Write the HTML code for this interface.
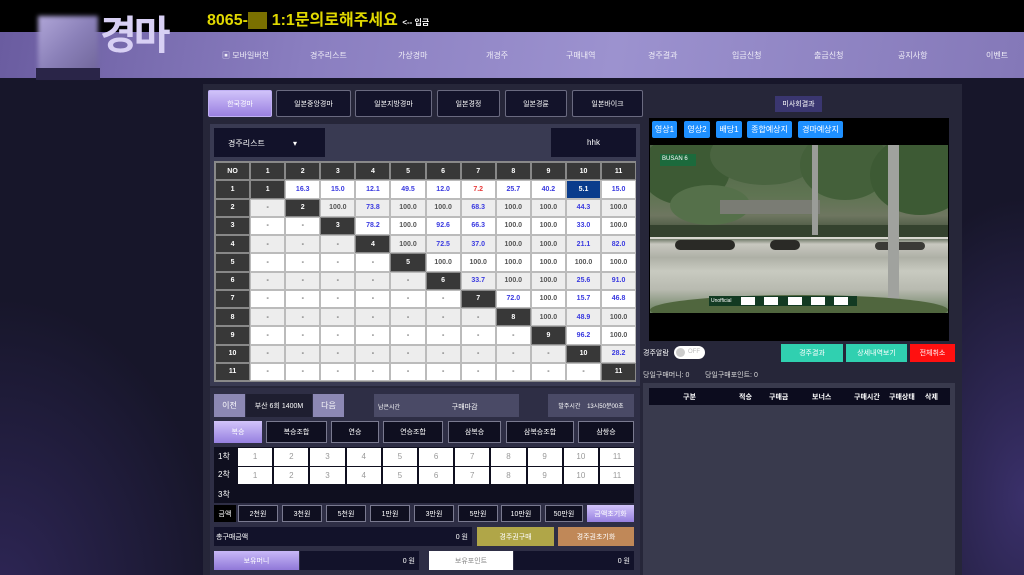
<!DOCTYPE html>
<html><head><meta charset="utf-8">
<style>
*{margin:0;padding:0;box-sizing:border-box}
body{width:1024px;height:575px;overflow:hidden;position:relative;font-family:"Liberation Sans","Noto Sans CJK KR",sans-serif;background:#171628;color:#fff}
.a{position:absolute}
.c{display:flex;align-items:center;justify-content:center}
.bg{position:absolute;left:0;top:78px;width:1024px;height:497px;background:radial-gradient(ellipse 220px 300px at 0px 520px,#2e2656 0%,rgba(40,32,80,0) 100%),radial-gradient(ellipse 160px 300px at 1024px 420px,#3a306a 0%,rgba(40,32,80,0) 100%),#17162a}
.nav{left:0;top:32px;width:1024px;height:46px;background:linear-gradient(100deg,#6a5ca0 0%,#8a7ec0 30%,#9c92cf 60%,#8478b8 100%)}
.nav span{position:absolute;top:18px;font-size:8px;color:#f0eef8}
.tab{top:90px;height:27px;font-size:7px;border:1px solid #6a6a80;background:#13132a;border-radius:2px}
.g{display:grid;grid-template-columns:repeat(12,35.1px);grid-auto-rows:18.25px;left:214px;top:161px;width:422px;background:#8a8a8a;border:1px solid #8a8a8a}
.g div{display:flex;align-items:center;justify-content:center;font-size:7px;font-weight:bold;border:0.5px solid #bbb;color:#555}
.h{background:#383838!important;color:#fff!important;border-color:#888!important}
.w{background:#fff}.e{background:#ededed}
.b{color:#3a3ae0!important}.r{color:#e83a3a!important}
.bt{font-size:7px;border:1px solid #7a7a90;background:#0f0f20}
.n{background:#fff;color:#999;font-size:8px}
.vb{top:121px;height:17px;background:#1e90ff;font-size:8px;border-radius:2px}
.tr{position:absolute;border-radius:50%;background:#3d5a34}
</style></head><body>
<div class="bg"></div>
<div class="a" style="left:0;top:0;width:1024px;height:32px;background:#000"></div>
<div class="a nav">
<span style="left:222px">▣ 모바일버전</span><span style="left:310px">경주리스트</span><span style="left:398px">가상경마</span><span style="left:486px">개경주</span><span style="left:566px">구매내역</span><span style="left:648px">경주결과</span><span style="left:732px">입금신청</span><span style="left:814px">출금신청</span><span style="left:898px">공지사항</span><span style="left:986px">이벤트</span>
</div>
<div class="a" style="left:38px;top:16px;width:60px;height:60px;background:linear-gradient(135deg,#b0a6d8,#8a80b8 50%,#6e6498);filter:blur(2px)"></div>
<div class="a" style="left:36px;top:68px;width:64px;height:12px;background:#2a2548"></div>
<div class="a" style="left:100px;top:12px;font-size:40px;font-weight:bold;color:#d8d0f4;letter-spacing:-3px;line-height:48px">경마</div>
<div class="a" style="left:207px;top:6px;font-size:16px;font-weight:bold;color:#e0d800">8065-<span style="background:#7a7000;color:#7a7000">■■</span> 1:1문의로해주세요 <span style="font-size:8px;color:#fff">&lt;-- 입금</span></div>

<div class="a" style="left:203px;top:84px;width:759px;height:491px;background:#262639"></div>
<div class="a tab c" style="left:276px;width:75px">일본중앙경마</div>
<div class="a tab c" style="left:355px;width:77px">일본지방경마</div>
<div class="a tab c" style="left:437px;width:63px">일본경정</div>
<div class="a tab c" style="left:505px;width:62px">일본경륜</div>
<div class="a tab c" style="left:572px;width:71px">일본바이크</div>
<div class="a tab c" style="left:208px;width:64px;background:linear-gradient(#d0c2fa,#9a80e0);border-color:#c0b0f4;color:#fff">한국경마</div>

<div class="a" style="left:210px;top:124px;width:430px;height:262px;background:#393a52"></div>
<div class="a" style="left:214px;top:128px;width:111px;height:29px;background:#12122a;font-size:8px;padding:10px 0 0 14px">경주리스트 <span style="margin-left:26px">▾</span></div>
<div class="a c" style="left:551px;top:128px;width:85px;height:29px;background:#12122a;font-size:8px">hhk</div>

<div class="a g">
<div class="h">NO</div><div class="h">1</div><div class="h">2</div><div class="h">3</div><div class="h">4</div><div class="h">5</div><div class="h">6</div><div class="h">7</div><div class="h">8</div><div class="h">9</div><div class="h">10</div><div class="h">11</div>
<div class="h">1</div><div class="h">1</div><div class="w b">16.3</div><div class="w b">15.0</div><div class="w b">12.1</div><div class="w b">49.5</div><div class="w b">12.0</div><div class="w r">7.2</div><div class="w b">25.7</div><div class="w b">40.2</div><div style="background:#0a3c8c;color:#fff">5.1</div><div class="w b">15.0</div>
<div class="h">2</div><div class="e">-</div><div class="h">2</div><div class="e">100.0</div><div class="e b">73.8</div><div class="e">100.0</div><div class="e">100.0</div><div class="e b">68.3</div><div class="e">100.0</div><div class="e">100.0</div><div class="e b">44.3</div><div class="e">100.0</div>
<div class="h">3</div><div class="w">-</div><div class="w">-</div><div class="h">3</div><div class="w b">78.2</div><div class="w">100.0</div><div class="w b">92.6</div><div class="w b">66.3</div><div class="w">100.0</div><div class="w">100.0</div><div class="w b">33.0</div><div class="w">100.0</div>
<div class="h">4</div><div class="e">-</div><div class="e">-</div><div class="e">-</div><div class="h">4</div><div class="e">100.0</div><div class="e b">72.5</div><div class="e b">37.0</div><div class="e">100.0</div><div class="e">100.0</div><div class="e b">21.1</div><div class="e b">82.0</div>
<div class="h">5</div><div class="w">-</div><div class="w">-</div><div class="w">-</div><div class="w">-</div><div class="h">5</div><div class="w">100.0</div><div class="w">100.0</div><div class="w">100.0</div><div class="w">100.0</div><div class="w">100.0</div><div class="w">100.0</div>
<div class="h">6</div><div class="e">-</div><div class="e">-</div><div class="e">-</div><div class="e">-</div><div class="e">-</div><div class="h">6</div><div class="e b">33.7</div><div class="e">100.0</div><div class="e">100.0</div><div class="e b">25.6</div><div class="e b">91.0</div>
<div class="h">7</div><div class="w">-</div><div class="w">-</div><div class="w">-</div><div class="w">-</div><div class="w">-</div><div class="w">-</div><div class="h">7</div><div class="w b">72.0</div><div class="w">100.0</div><div class="w b">15.7</div><div class="w b">46.8</div>
<div class="h">8</div><div class="e">-</div><div class="e">-</div><div class="e">-</div><div class="e">-</div><div class="e">-</div><div class="e">-</div><div class="e">-</div><div class="h">8</div><div class="e">100.0</div><div class="e b">48.9</div><div class="e">100.0</div>
<div class="h">9</div><div class="w">-</div><div class="w">-</div><div class="w">-</div><div class="w">-</div><div class="w">-</div><div class="w">-</div><div class="w">-</div><div class="w">-</div><div class="h">9</div><div class="w b">96.2</div><div class="w">100.0</div>
<div class="h">10</div><div class="e">-</div><div class="e">-</div><div class="e">-</div><div class="e">-</div><div class="e">-</div><div class="e">-</div><div class="e">-</div><div class="e">-</div><div class="e">-</div><div class="h">10</div><div class="e b">28.2</div>
<div class="h">11</div><div class="w">-</div><div class="w">-</div><div class="w">-</div><div class="w">-</div><div class="w">-</div><div class="w">-</div><div class="w">-</div><div class="w">-</div><div class="w">-</div><div class="w">-</div><div class="h">11</div>
</div>

<!-- bottom left -->
<div class="a" style="left:210px;top:388px;width:430px;height:187px;background:#2e2e45"></div>
<div class="a c" style="left:214px;top:394px;width:31px;height:23px;background:#8c88b4;font-size:8px">이전</div>
<div class="a c" style="left:246px;top:394px;width:66px;height:23px;background:#1e1e30;font-size:7px">부산 6회 1400M</div>
<div class="a c" style="left:313px;top:394px;width:31px;height:23px;background:#8c88b4;font-size:8px">다음</div>
<div class="a" style="left:374px;top:394px;width:145px;height:23px;background:#4a4a66;font-size:6px;padding:8px 0 0 4px">남은시간 <span style="margin-left:50px;font-size:7px">구매마감</span></div>
<div class="a c" style="left:548px;top:394px;width:86px;height:23px;background:#4a4a66;font-size:6px">발주시간 &nbsp;&nbsp; 13시50분00초</div>
<div class="a c" style="left:214px;top:421px;width:48px;height:22px;background:linear-gradient(#d2c4fa,#9680e0);font-size:7px">복승</div>
<div class="a c bt" style="left:266px;top:421px;width:61px;height:22px">복승조합</div>
<div class="a c bt" style="left:331px;top:421px;width:48px;height:22px">연승</div>
<div class="a c bt" style="left:383px;top:421px;width:60px;height:22px">연승조합</div>
<div class="a c bt" style="left:448px;top:421px;width:53px;height:22px">삼복승</div>
<div class="a c bt" style="left:506px;top:421px;width:68px;height:22px">삼복승조합</div>
<div class="a c bt" style="left:578px;top:421px;width:56px;height:22px">삼쌍승</div>
<div class="a" style="left:214px;top:447px;width:420px;height:56px;background:#0f0f1f"></div>
<div class="a" style="left:218px;top:451px;font-size:8px">1착</div>
<div class="a" style="left:218px;top:469px;font-size:8px">2착</div>
<div class="a" style="left:218px;top:489px;font-size:8px">3착</div>
<div class="a" style="left:238px;top:448px;display:grid;grid-template-columns:repeat(11,34.3px);column-gap:1.9px;row-gap:1px;grid-auto-rows:17.5px">
<div class="n c">1</div><div class="n c">2</div><div class="n c">3</div><div class="n c">4</div><div class="n c">5</div><div class="n c">6</div><div class="n c">7</div><div class="n c">8</div><div class="n c">9</div><div class="n c">10</div><div class="n c">11</div>
<div class="n c">1</div><div class="n c">2</div><div class="n c">3</div><div class="n c">4</div><div class="n c">5</div><div class="n c">6</div><div class="n c">7</div><div class="n c">8</div><div class="n c">9</div><div class="n c">10</div><div class="n c">11</div>
</div>
<div class="a c" style="left:214px;top:505px;width:22px;height:17px;background:#000;font-size:7px">금액</div>
<div class="a c bt" style="left:238px;top:505px;width:40px;height:17px">2천원</div>
<div class="a c bt" style="left:282px;top:505px;width:40px;height:17px">3천원</div>
<div class="a c bt" style="left:326px;top:505px;width:40px;height:17px">5천원</div>
<div class="a c bt" style="left:370px;top:505px;width:40px;height:17px">1만원</div>
<div class="a c bt" style="left:414px;top:505px;width:40px;height:17px">3만원</div>
<div class="a c bt" style="left:458px;top:505px;width:40px;height:17px">5만원</div>
<div class="a c bt" style="left:501px;top:505px;width:40px;height:17px">10만원</div>
<div class="a c bt" style="left:545px;top:505px;width:38px;height:17px">50만원</div>
<div class="a c" style="left:587px;top:505px;width:47px;height:17px;background:linear-gradient(#d2c4fa,#9680e0);font-size:7px">금액초기화</div>
<div class="a" style="left:214px;top:527px;width:258px;height:19px;background:#12122a;font-size:7px;padding:5px 0 0 2px">총구매금액<span style="position:absolute;right:4px">0 원</span></div>
<div class="a c" style="left:477px;top:527px;width:77px;height:19px;background:#b0a648;font-size:7px">경주권구매</div>
<div class="a c" style="left:558px;top:527px;width:76px;height:19px;background:#c08858;font-size:7px">경주권초기화</div>
<div class="a c" style="left:214px;top:551px;width:85px;height:19px;background:linear-gradient(#c8b8f8,#9078d8);font-size:7px">보유머니</div>
<div class="a" style="left:300px;top:551px;width:119px;height:19px;background:#12122a;font-size:7px;text-align:right;padding:5px 4px 0 0">0 원</div>
<div class="a c" style="left:429px;top:551px;width:84px;height:19px;background:#fff;color:#888;font-size:7px">보유포인트</div>
<div class="a" style="left:514px;top:551px;width:120px;height:19px;background:#12122a;font-size:7px;text-align:right;padding:5px 4px 0 0">0 원</div>

<!-- right -->
<div class="a c" style="left:775px;top:96px;width:47px;height:16px;background:#3a3670;font-size:7px">미사회결과</div>
<div class="a" style="left:649px;top:118px;width:300px;height:223px;background:#000"></div>
<div class="a c vb" style="left:652px;width:25px">영상1</div>
<div class="a c vb" style="left:684px;width:26px">영상2</div>
<div class="a c vb" style="left:716px;width:26px">배당1</div>
<div class="a c vb" style="left:747px;width:45px">종합예상지</div>
<div class="a c vb" style="left:798px;width:45px">경마예상지</div>
<div class="a" style="left:650px;top:145px;width:298px;height:168px;overflow:hidden;background:linear-gradient(180deg,#4e6446 0%,#5f7452 30%,#6e7660 42%,#3a4a34 54%,#c8c8c0 59%,#aeb0a6 67%,#c8cac0 75%,#b8bab0 86%,#6a8060 100%)">
<div class="tr" style="left:-10px;top:-10px;width:90px;height:70px"></div>
<div class="tr" style="left:60px;top:-20px;width:110px;height:60px;background:#4a6440"></div>
<div class="tr" style="left:150px;top:-15px;width:90px;height:70px;background:#44603a"></div>
<div class="tr" style="left:220px;top:-10px;width:100px;height:80px"></div>
<div class="tr" style="left:20px;top:40px;width:80px;height:40px;background:#55704a"></div>
<div class="a" style="left:70px;top:55px;width:100px;height:14px;background:#7a7c74"></div>
<div class="a" style="left:0;top:80px;width:298px;height:12px;background:#34422e"></div>
<div class="a" style="left:0;top:92px;width:298px;height:2px;background:#d8d8d0"></div>
<div class="a" style="left:25px;top:95px;width:60px;height:10px;background:#2a2a26;border-radius:5px"></div>
<div class="a" style="left:120px;top:95px;width:30px;height:10px;background:#2a2a26;border-radius:5px"></div>
<div class="a" style="left:225px;top:97px;width:50px;height:8px;background:#3a3a36;border-radius:5px"></div>
<div class="a" style="left:162px;top:0;width:6px;height:90px;background:#9a9c98"></div>
<div class="a" style="left:238px;top:0;width:11px;height:160px;background:#a0a29e"></div>
<div class="tr" style="left:0;top:150px;width:298px;height:30px;background:#50663e"></div>
</div>
<div class="a" style="left:660px;top:154px;width:36px;height:12px;background:#1c6a3c;font-size:6px;padding:2px">BUSAN 6</div>
<div class="a" style="left:709px;top:296px;width:148px;height:10px;background:#123a22;font-size:5px;padding:2px">Unofficial
<span class="a" style="left:32px;top:1px;width:14px;height:8px;background:#fff"></span><span class="a" style="left:55px;top:1px;width:14px;height:8px;background:#fff"></span><span class="a" style="left:79px;top:1px;width:14px;height:8px;background:#fff"></span><span class="a" style="left:102px;top:1px;width:14px;height:8px;background:#fff"></span><span class="a" style="left:125px;top:1px;width:14px;height:8px;background:#fff"></span></div>
<div class="a" style="left:643px;top:348px;font-size:7px">경주알람</div>
<div class="a" style="left:674px;top:346px;width:31px;height:13px;background:#fff;border-radius:7px;font-size:6px;color:#bbb;padding:3px 0 0 14px">OFF</div>
<div class="a" style="left:676px;top:348px;width:9px;height:9px;background:#ccc;border-radius:50%"></div>
<div class="a c" style="left:781px;top:344px;width:62px;height:18px;background:#30d0b0;font-size:7px">경주결과</div>
<div class="a c" style="left:846px;top:344px;width:61px;height:18px;background:#30d0b0;font-size:7px">상세내역보기</div>
<div class="a c" style="left:910px;top:344px;width:45px;height:18px;background:#ff1010;font-size:7px">전체취소</div>
<div class="a" style="left:643px;top:370px;font-size:7px;color:#ddd">당일구매머니: 0 &nbsp;&nbsp;&nbsp;&nbsp;&nbsp;&nbsp; 당일구매포인트: 0</div>
<div class="a" style="left:643px;top:383px;width:312px;height:192px;background:#393a4d"></div>
<div class="a" style="left:649px;top:388px;width:301px;height:17px;background:#0c0c1e;font-size:7px;font-weight:bold">
<span class="a" style="left:34px;top:4px">구분</span><span class="a" style="left:90px;top:4px">적승</span><span class="a" style="left:120px;top:4px">구매금</span><span class="a" style="left:163px;top:4px">보너스</span><span class="a" style="left:205px;top:4px">구매시간</span><span class="a" style="left:240px;top:4px">구매상태</span><span class="a" style="left:276px;top:4px">삭제</span>
</div>
</body></html>
